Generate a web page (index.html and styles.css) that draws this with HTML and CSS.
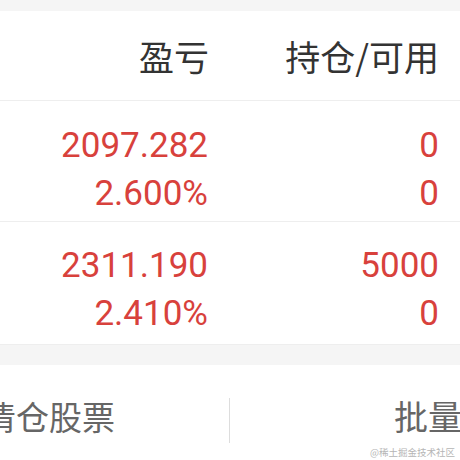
FILE: index.html
```html
<!DOCTYPE html>
<html lang="zh">
<head>
<meta charset="utf-8">
<link rel="stylesheet" href="styles.css">
</head>
<body>
<div class="screen">
  <div class="gap-top"></div>
  <div class="row head">
    <div class="cell">盈亏</div>
    <div class="cell">持仓/可用</div>
  </div>
  <div class="row item">
    <div class="cell num">
      <div>2097.282</div>
      <div>2.600%</div>
    </div>
    <div class="cell num">
      <div>0</div>
      <div>0</div>
    </div>
  </div>
  <div class="row item item2">
    <div class="cell num">
      <div>2311.190</div>
      <div>2.410%</div>
    </div>
    <div class="cell num">
      <div>5000</div>
      <div>0</div>
    </div>
  </div>
  <div class="gap-mid"></div>
  <div class="bar">
    <div class="btn left"><span>清仓股票</span></div>
    <div class="divider"></div>
    <div class="btn right"><span>批量</span></div>
    <div class="mark">@稀土掘金技术社区</div>
  </div>
</div>
</body>
</html>
```
FILE: styles.css
```css
html, body {
  margin: 0;
  padding: 0;
  background: #ffffff;
}
.screen {
  width: 460px;
  height: 460px;
  overflow: hidden;
  display: flex;
  flex-direction: column;
  font-family: "Noto Sans CJK SC", "Noto Sans", sans-serif;
}
.gap-top {
  height: 11px;
  background: #f5f5f5;
  flex: none;
}
.row {
  display: grid;
  grid-template-columns: 209px 230px;
  padding-right: 21px;
  border-bottom: 1px solid #eeeeee;
  flex: none;
}
.cell {
  text-align: right;
}
.head {
  height: 89px;
  align-items: center;
  font-size: 35px;
  color: #333333;
}
.head .cell {
  line-height: 40px;
}
.item {
  height: 121px;
  box-sizing: border-box;
  padding-top: 21px;
}
.item2 {
  height: 123px;
  padding-top: 20px;
}
.item .num:first-child {
  margin-right: 1px;
}
.num {
  font-family: "Roboto", "Liberation Sans", sans-serif;
  font-size: 35px;
  line-height: 48px;
  color: #d8413c;
}
.gap-mid {
  height: 20px;
  background: #f5f5f5;
  flex: none;
}
.bar {
  position: relative;
  flex: 1;
  display: flex;
  align-items: center;
  padding-top: 7px;
  font-size: 33px;
  color: #666666;
}
.btn {
  width: 230px;
  white-space: nowrap;
}
.btn span {
  display: block;
  line-height: 40px;
}
.left span {
  margin-left: -17px;
}
.right span {
  margin-left: 164px;
  font-size: 34px;
}
.divider {
  width: 1px;
  height: 45px;
  background: #dddddd;
  margin-left: -1px;
  margin-top: 8px;
}
.mark {
  position: absolute;
  right: 5px;
  bottom: 2px;
  font-size: 9.5px;
  line-height: 12px;
  color: #b5b5b5;
}
```
